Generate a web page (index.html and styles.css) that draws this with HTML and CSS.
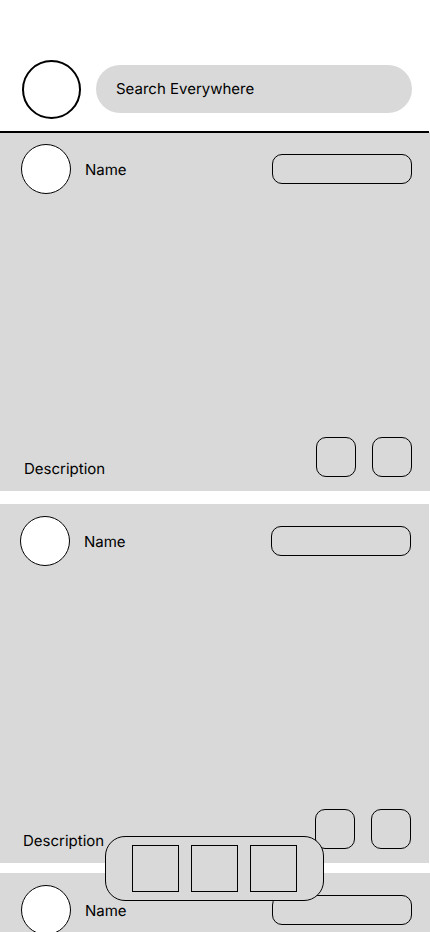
FILE: index.html
```html
<!DOCTYPE html>
<html lang="en">
<head>
<meta charset="utf-8">
<meta name="viewport" content="width=device-width, initial-scale=1">
<title>Feed</title>
<link rel="stylesheet" href="styles.css">
</head>
<body>
<header class="topbar">
  <button class="profile" type="button" aria-label="Profile"></button>
  <input class="search" type="search" placeholder="Search Everywhere" aria-label="Search Everywhere">
</header>
<main class="feed">
  <article class="post">
    <div class="post-head">
      <span class="avatar"></span>
      <span class="name">Name</span>
      <button class="follow" type="button" aria-label="Follow"></button>
    </div>
    <div class="post-foot">
      <p class="description">Description</p>
      <button class="action" type="button" aria-label="Like"></button>
      <button class="action" type="button" aria-label="Share"></button>
    </div>
  </article>
  <article class="post post-shifted">
    <div class="post-head">
      <span class="avatar"></span>
      <span class="name">Name</span>
      <button class="follow" type="button" aria-label="Follow"></button>
    </div>
    <div class="post-foot">
      <p class="description">Description</p>
      <button class="action" type="button" aria-label="Like"></button>
      <button class="action" type="button" aria-label="Share"></button>
    </div>
  </article>
  <article class="post">
    <div class="post-head">
      <span class="avatar"></span>
      <span class="name">Name</span>
      <button class="follow" type="button" aria-label="Follow"></button>
    </div>
  </article>
</main>
<div class="dock">
  <nav class="dock-bar" aria-label="Main">
    <button class="tab" type="button" aria-label="Home"></button>
    <button class="tab" type="button" aria-label="Create"></button>
    <button class="tab" type="button" aria-label="Messages"></button>
  </nav>
</div>
</body>
</html>
```
FILE: styles.css
```css
* {
  box-sizing: border-box;
}

body {
  margin: 0;
  height: 100vh;
  display: flex;
  flex-direction: column;
  background: #fff;
  color: #000;
  font: 15px/16px Inter, "Liberation Sans", sans-serif;
  text-rendering: geometricPrecision;
}

button {
  flex: none;
  padding: 0;
  border: 1px solid #000;
  background: transparent;
}

.topbar {
  position: relative;
  z-index: 1;
  display: flex;
  align-items: flex-start;
  gap: 15px;
  margin-right: 1px;
  padding: 60px 17px 12px 22px;
  border-bottom: 2px solid #000;
}

.profile {
  width: 59px;
  height: 59px;
  border-width: 2px;
  border-radius: 50%;
  background: #fff;
}

.search {
  flex: 1;
  min-width: 0;
  height: 48px;
  margin: 5px 0 0;
  padding: 0 20px 2px;
  border: 0;
  border-radius: 24px;
  background: #d9d9d9;
  color: inherit;
  font: inherit;
  text-rendering: inherit;
  appearance: none;
}

.search::placeholder {
  color: #000;
  opacity: 1;
}

.feed {
  flex: 1;
  min-height: 0;
  margin-top: -1px;
  overflow: hidden auto;
  scrollbar-width: none;
}

.post {
  display: flex;
  flex-direction: column;
  justify-content: space-between;
  min-height: 359px;
  padding: 12px 18px 14px 21px;
  background: #d9d9d9;
}

.post-shifted {
  margin: 13px 1px 10px -1px;
}

.post-head {
  display: flex;
  align-items: center;
}

.avatar {
  width: 50px;
  height: 50px;
  margin-right: 14px;
  border: 1px solid #000;
  border-radius: 50%;
  background: #fff;
}

.name {
  padding-top: 2px;
}

.follow {
  width: 140px;
  height: 30px;
  margin-left: auto;
  border-radius: 10px;
}

.post-foot {
  display: flex;
  align-items: flex-end;
  gap: 16px;
}

.description {
  flex: 1;
  margin: 0;
  padding-left: 3px;
}

.action {
  width: 40px;
  height: 40px;
  border-radius: 10px;
}

.dock {
  position: fixed;
  right: 1px;
  bottom: 31px;
  left: 0;
  z-index: 2;
  display: flex;
  justify-content: center;
  pointer-events: none;
}

.dock-bar {
  display: flex;
  gap: 12px;
  padding: 8px 26px;
  border: 1px solid #000;
  border-radius: 20px;
  background: #d9d9d9;
  pointer-events: auto;
}

.tab {
  width: 47px;
  height: 47px;
}
```
